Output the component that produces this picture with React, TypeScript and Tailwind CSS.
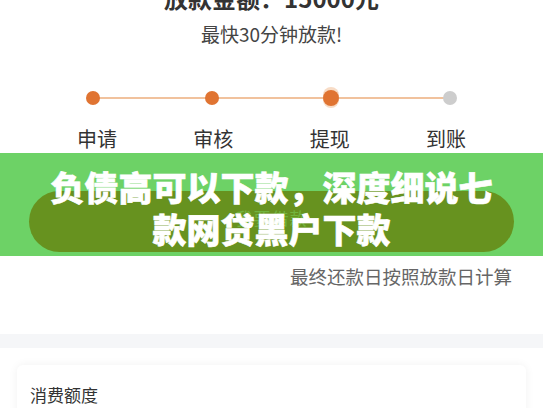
const steps = [
  { label: '申请', state: 'done' },
  { label: '审核', state: 'done' },
  { label: '提现', state: 'current' },
  { label: '到账', state: 'todo' },
];

function StepDot({ state }: { state: string }) {
  if (state === 'current') {
    return (
      <span className="flex h-[21px] w-[21px] items-center justify-center rounded-full bg-[#f8dcc6]">
        <span className="h-[16px] w-[16px] rounded-full bg-[#e07432]" />
      </span>
    );
  }
  return (
    <span
      className={
        state === 'done'
          ? 'h-[14px] w-[14px] rounded-full bg-[#e07432]'
          : 'h-[14px] w-[14px] rounded-full bg-[#cdcdcd]'
      }
    />
  );
}

export default function App() {
  return (
    <div
      className="relative h-[408px] w-[543px] overflow-hidden bg-white text-[#333]"
      style={{ fontFamily: '"Noto Sans CJK SC", "Noto Sans", sans-serif' }}
    >
      {/* loan summary */}
      <div className="mt-[-14px] h-[24px] text-center text-[24px] font-bold leading-[24px] text-[#333]">
        放款金额：15000元
      </div>
      <div className="mt-[14px] h-[19px] text-center text-[19px] leading-[19px] text-[#444]">
        最快30分钟放款!
      </div>

      {/* progress */}
      <div className="relative mx-[86px] mt-[44px] flex h-[21px] items-center justify-between">
        <div className="absolute left-[7px] right-[7px] top-[10px] h-[2px] bg-[#f1c29d]" />
        {steps.map((s) => (
          <div key={s.label} className="relative flex w-[14px] justify-center">
            <StepDot state={s.state} />
          </div>
        ))}
      </div>
      <div className="mx-[77px] mt-[21px] flex justify-between">
        {steps.map((s) => (
          <span key={s.label} className="w-[40px] text-center text-[20px] leading-[20px] text-[#333]">
            {s.label}
          </span>
        ))}
      </div>

      {/* green banner over the button */}
      <div className="relative mt-[4px] h-[103px] bg-[#6dd266] pt-[38px]">
        <div className="relative mx-[29px] flex h-[61px] items-center justify-center rounded-full bg-[#67921f]">
          <span className="mb-[8px] text-[17px] tracking-[1px] text-[#72b43f]">我要借款</span>
        </div>
        <div className="absolute inset-x-0 top-[13px] text-center text-[34px] font-black leading-[42px] text-white [-webkit-text-stroke:0.6px_white]">
          负债高可以下款，深度细说七
          <br />
          款网贷黑户下款
        </div>
      </div>

      <div className="mt-[11px] pr-[31px] text-right text-[18.5px] leading-[19px] text-[#666]">
        最终还款日按照放款日计算
      </div>

      <div className="mt-[48px] h-[14px] bg-[#f5f6f8]" />

      <div className="mx-[17px] mt-[17px] h-[80px] rounded-[6px] bg-white px-[13px] pt-[21px] shadow-[0_0_10px_rgba(0,0,0,0.06)]">
        <div className="text-[17px] leading-[17px] text-[#333]">消费额度</div>
      </div>
    </div>
  );
}
